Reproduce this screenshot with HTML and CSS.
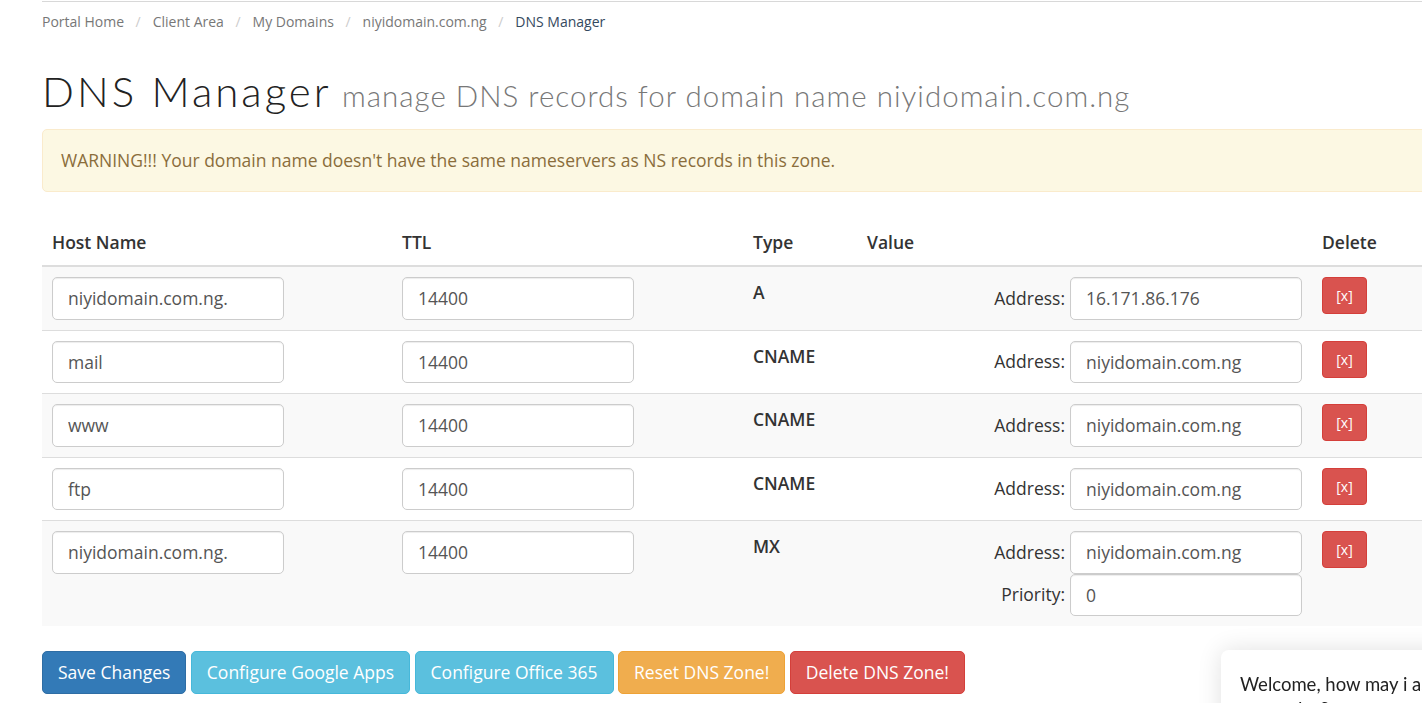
FILE: index.html
```html
<!DOCTYPE html>
<html lang="en">
<head>
<meta charset="utf-8">
<title>DNS Manager</title>
<link rel="stylesheet" href="styles.css">
</head>
<body>
<div class="wrap">
  <ol class="breadcrumb">
    <li><a href="#">Portal Home</a></li>
    <li><a href="#">Client Area</a></li>
    <li><a href="#">My Domains</a></li>
    <li><a href="#">niyidomain.com.ng</a></li>
    <li class="active">DNS Manager</li>
  </ol>

  <h1 class="page-title">DNS Manager <small>manage DNS records for domain name niyidomain.com.ng</small></h1>

  <div class="alert-warning">WARNING!!! Your domain name doesn't have the same nameservers as NS records in this zone.</div>

  <table class="dns-table">
    <colgroup>
      <col class="c-host"><col class="c-ttl"><col class="c-type"><col class="c-value"><col class="c-del">
    </colgroup>
    <thead>
      <tr><th>Host Name</th><th>TTL</th><th>Type</th><th>Value</th><th>Delete</th></tr>
    </thead>
    <tbody>
      <tr>
        <td><input class="field" type="text" value="niyidomain.com.ng."></td>
        <td><input class="field" type="text" value="14400"></td>
        <td class="type">A</td>
        <td><div class="val-row"><label>Address:</label><input class="field" type="text" value="16.171.86.176"></div></td>
        <td><button class="btn-x">[x]</button></td>
      </tr>
      <tr>
        <td><input class="field" type="text" value="mail"></td>
        <td><input class="field" type="text" value="14400"></td>
        <td class="type">CNAME</td>
        <td><div class="val-row"><label>Address:</label><input class="field" type="text" value="niyidomain.com.ng"></div></td>
        <td><button class="btn-x">[x]</button></td>
      </tr>
      <tr>
        <td><input class="field" type="text" value="www"></td>
        <td><input class="field" type="text" value="14400"></td>
        <td class="type">CNAME</td>
        <td><div class="val-row"><label>Address:</label><input class="field" type="text" value="niyidomain.com.ng"></div></td>
        <td><button class="btn-x">[x]</button></td>
      </tr>
      <tr>
        <td><input class="field" type="text" value="ftp"></td>
        <td><input class="field" type="text" value="14400"></td>
        <td class="type">CNAME</td>
        <td><div class="val-row"><label>Address:</label><input class="field" type="text" value="niyidomain.com.ng"></div></td>
        <td><button class="btn-x">[x]</button></td>
      </tr>
      <tr>
        <td><input class="field" type="text" value="niyidomain.com.ng."></td>
        <td><input class="field" type="text" value="14400"></td>
        <td class="type">MX</td>
        <td>
          <div class="val-row"><label>Address:</label><input class="field" type="text" value="niyidomain.com.ng"></div>
          <div class="val-row"><label>Priority:</label><input class="field" type="text" value="0"></div>
        </td>
        <td><button class="btn-x">[x]</button></td>
      </tr>
    </tbody>
  </table>

  <div class="actions">
    <button class="btn btn-primary">Save Changes</button>
    <button class="btn btn-info">Configure Google Apps</button>
    <button class="btn btn-info">Configure Office 365</button>
    <button class="btn btn-warning">Reset DNS Zone!</button>
    <button class="btn btn-danger">Delete DNS Zone!</button>
  </div>
</div>

<div class="chat-bubble">Welcome, how may i assist you today?</div>
</body>
</html>
```
FILE: styles.css
```css
html, body {
  margin: 0;
  padding: 0;
  overflow: hidden;
  background: #fff;
}
body {
  padding-top: 1px;
  font-family: "Open Sans", "Liberation Sans", sans-serif;
  font-size: 17.5px;
  line-height: 25px;
  color: #333;
}
.wrap {
  margin-left: 42px;
  width: 1440px;
  border-top: 1px solid #d8d8d8;
}
.breadcrumb {
  list-style: none;
  margin: 0;
  padding: 9px 0 0;
  display: flex;
  font-size: 14px;
  line-height: 22px;
}
.breadcrumb li + li::before {
  content: "/";
  color: #ccc;
  padding: 0 12px 0 11.5px;
}
.breadcrumb a {
  color: #777;
  text-decoration: none;
}
.breadcrumb .active {
  color: #34495e;
}
.page-title {
  margin: 35px 0 10px;
  font-family: Lato, "Open Sans", sans-serif;
  font-weight: 300;
  font-size: 42px;
  letter-spacing: 3px;
  line-height: 46px;
  color: #222;
}
.page-title small {
  font-size: 29.5px;
  letter-spacing: 1px;
  color: #777;
  font-weight: 300;
  margin-left: -3px;
}
.alert-warning {
  background: #fcf8e3;
  border: 1px solid #faebcc;
  border-radius: 5px;
  color: #8a6d3b;
  padding: 18px 18px;
  font-size: 17.5px;
  margin-bottom: 28px;
}
.dns-table {
  border-collapse: collapse;
  table-layout: fixed;
  width: 1420px;
}
.c-host { width: 350px; }
.c-ttl { width: 351px; }
.c-type { width: 114px; }
.c-value { width: 455px; }
.c-del { width: 150px; }
.dns-table th {
  text-align: left;
  font-weight: 600;
  padding: 10px;
  border-bottom: 2px solid #ddd;
  vertical-align: bottom;
}
.dns-table td {
  padding: 10px 10px 10px;
  border-top: 1px solid #ddd;
  vertical-align: top;
}
.dns-table tbody tr:nth-child(odd) {
  background: #f9f9f9;
}
.dns-table td.type {
  font-weight: 600;
  padding-top: 13px;
}
.field {
  box-sizing: border-box;
  display: block;
  width: 232px;
  height: 42.5px;
  padding: 7px 15px;
  font-family: "Open Sans", "Liberation Sans", sans-serif;
  font-size: 17.5px;
  color: #555;
  background: #fff;
  border: 1px solid #ccc;
  border-radius: 5px;
  box-shadow: inset 0 1px 1px rgba(0,0,0,.075);
}
.val-row {
  display: flex;
  justify-content: flex-end;
  align-items: center;
}
.val-row label {
  margin-right: 5px;
}
.btn-x {
  width: 45px;
  height: 37px;
  padding: 0;
  background: #d9534f;
  border: 1px solid #d43f3a;
  border-radius: 4px;
  color: #fff;
  font-family: "Open Sans", "Liberation Sans", sans-serif;
  font-size: 14px;
}
.actions {
  margin-top: 25px;
  display: flex;
  gap: 4.5px;
}
.btn {
  height: 42.5px;
  padding: 0 15px;
  border: 1px solid transparent;
  border-radius: 5px;
  color: #fff;
  font-family: "Open Sans", "Liberation Sans", sans-serif;
  font-size: 17.5px;
}
.btn-primary { background: #337ab7; border-color: #2e6da4; }
.btn-info { background: #5bc0de; border-color: #46b8da; }
.btn-warning { background: #f0ad4e; border-color: #eea236; }
.btn-danger { background: #d9534f; border-color: #d43f3a; }
.chat-bubble {
  position: fixed;
  left: 1221px;
  top: 650px;
  width: 230px;
  padding: 22px 19px;
  background: #fff;
  border-radius: 8px;
  box-shadow: 0 0 25px rgba(0,0,0,.12);
  font-family: Lato, sans-serif;
  font-size: 18.5px;
  line-height: 25px;
  color: #222;
}
```
